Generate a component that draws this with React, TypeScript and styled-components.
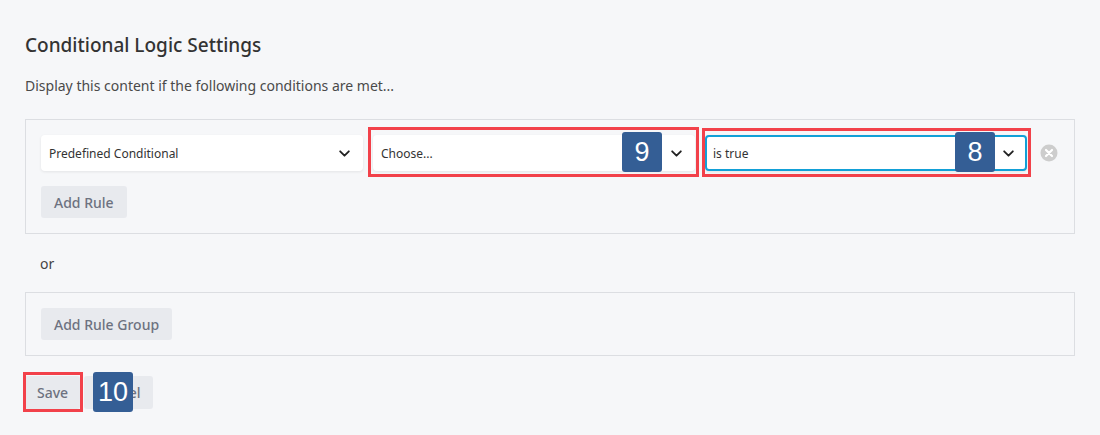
import styled, { createGlobalStyle } from "styled-components";

const GlobalStyle = createGlobalStyle`
  html, body {
    margin: 0;
    padding: 0;
    background: #f6f7f9;
    font-family: "Noto Sans", "Open Sans", sans-serif;
  }
  * { box-sizing: border-box; }
`;

const Page = styled.div`
  padding: 33px 25px 0 25px;
  width: 1100px;
  height: 435px;
  overflow: hidden;
`;

const Heading = styled.h2`
  margin: 0;
  font-size: 19px;
  line-height: 24px;
  font-weight: 500;
  color: #333;
`;

const Intro = styled.p`
  margin: 19px 0 23px;
  font-size: 14px;
  line-height: 20px;
  color: #4a4a4a;
`;

const Group = styled.div`
  width: 1050px;
  border: 1px solid #dcdee2;
  padding: 15px;
  display: flex;
  flex-direction: column;
  gap: 15px;
  align-items: flex-start;
`;

const RuleRow = styled.div`
  display: flex;
  align-items: center;
  gap: 10px;
  width: 100%;
`;

const SelectWrap = styled.div`
  position: relative;
  width: 322px;
`;

const Select = styled.div<{ $active?: boolean }>`
  height: 36px;
  background: #fff;
  border-radius: 4px;
  border: 2px solid ${(p) => (p.$active ? "#12a0d7" : "transparent")};
  box-shadow: 0 1px 3px rgba(0, 0, 0, 0.08);
  display: flex;
  align-items: center;
  justify-content: space-between;
  padding: 0 10px 0 6px;
  font-size: 12px;
  color: #333;
`;

const Chevron = () => (
  <svg width="13" height="13" viewBox="0 0 12 12" fill="none">
    <path d="M2 4l4 4 4-4" stroke="#222" strokeWidth="1.7" strokeLinecap="round" strokeLinejoin="round" />
  </svg>
);

// red annotation frame drawn over a control
const Highlight = styled.div<{ $l: number; $t: number; $r: number; $b: number }>`
  position: absolute;
  left: ${(p) => p.$l}px;
  top: ${(p) => p.$t}px;
  right: ${(p) => p.$r}px;
  bottom: ${(p) => p.$b}px;
  border: 3px solid #f2414a;
  pointer-events: none;
`;

const Badge = styled.div<{ $left?: number; $right?: number; $top: number }>`
  position: absolute;
  ${(p) => (p.$left !== undefined ? `left: ${p.$left}px;` : "")}
  ${(p) => (p.$right !== undefined ? `right: ${p.$right}px;` : "")}
  top: ${(p) => p.$top}px;
  width: 40px;
  height: 40px;
  background: #345e95;
  color: #fff;
  border-radius: 3px;
  display: flex;
  align-items: center;
  justify-content: center;
  font-family: "Liberation Sans", Arial, sans-serif;
  font-size: 27px;
  z-index: 2;
`;

const RemoveIcon = styled.svg`
  margin-left: 3px;
  flex: none;
`;

const Button = styled.button`
  height: 32px;
  padding: 0 13px;
  border: none;
  border-radius: 3px;
  background: #e8eaee;
  color: #6d7280;
  font-family: "Noto Sans", "Open Sans", sans-serif;
  font-size: 14px;
  font-weight: 500;
`;

const Or = styled.div`
  padding: 20px 0 0 15px;
  height: 58px;
  font-size: 14px;
  color: #444;
`;

const Actions = styled.div`
  position: relative;
  display: flex;
  gap: 4px;
  margin-top: 20px;
`;

const ActionButton = styled(Button)`
  height: 33px;
  padding: 0 12px;
`;

const SaveWrap = styled.div`
  position: relative;
`;

export default function App() {
  return (
    <>
      <GlobalStyle />
      <Page>
        <Heading>Conditional Logic Settings</Heading>
        <Intro>Display this content if the following conditions are met...</Intro>
        <Group>
          <RuleRow>
            <SelectWrap>
              <Select>
                <span>Predefined Conditional</span>
                <Chevron />
              </Select>
            </SelectWrap>
            <SelectWrap>
              <Select>
                <span>Choose...</span>
                <Chevron />
              </Select>
              <Highlight $l={-5} $t={-8} $r={-4} $b={-6} />
              <Badge $right={33} $top={-3}>9</Badge>
            </SelectWrap>
            <SelectWrap>
              <Select $active>
                <span>is true</span>
                <Chevron />
              </Select>
              <Highlight $l={-3} $t={-7} $r={-4} $b={-6} />
              <Badge $right={32} $top={-3}>8</Badge>
            </SelectWrap>
            <RemoveIcon width="18" height="18" viewBox="0 0 18 18">
              <circle cx="9" cy="9" r="8.5" fill="#cdcdcd" />
              <path d="M6 6l6 6M12 6l-6 6" stroke="#fff" strokeWidth="2.2" strokeLinecap="round" />
            </RemoveIcon>
          </RuleRow>
          <Button>Add Rule</Button>
        </Group>
        <Or>or</Or>
        <Group>
          <Button>Add Rule Group</Button>
        </Group>
        <Actions>
          <SaveWrap>
            <ActionButton>Save</ActionButton>
            <Highlight $l={-2} $t={-4} $r={-3} $b={-3} />
          </SaveWrap>
          <ActionButton>Cancel</ActionButton>
          <Badge $left={68} $top={-4}>10</Badge>
        </Actions>
      </Page>
    </>
  );
}
